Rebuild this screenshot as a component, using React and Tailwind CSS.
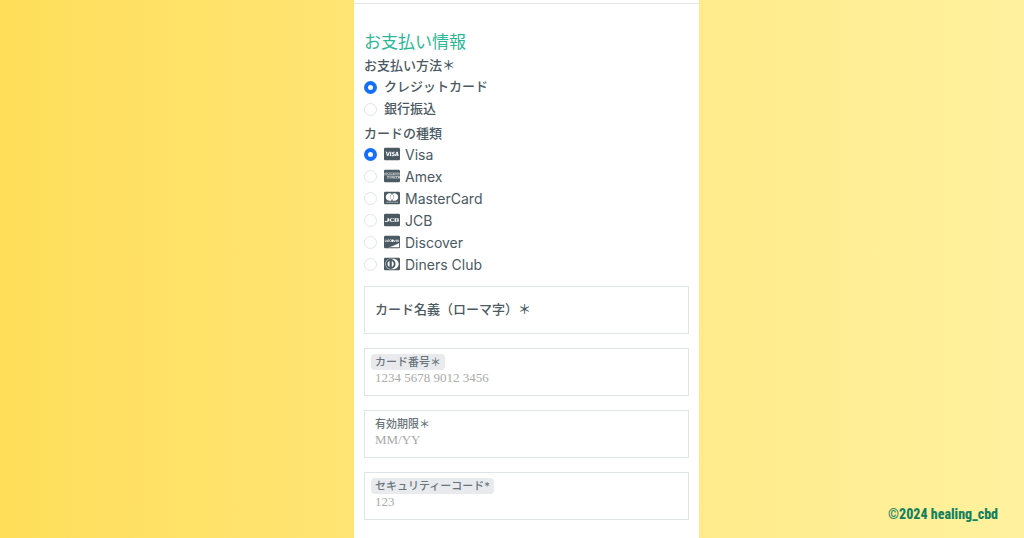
import {
  FaCcVisa,
  FaCcAmex,
  FaCcMastercard,
  FaCcJcb,
  FaCcDiscover,
  FaCcDinersClub,
} from "react-icons/fa";

const methods = ["クレジットカード", "銀行振込"];

const brands = [
  { name: "Visa", Icon: FaCcVisa },
  { name: "Amex", Icon: FaCcAmex },
  { name: "MasterCard", Icon: FaCcMastercard },
  { name: "JCB", Icon: FaCcJcb },
  { name: "Discover", Icon: FaCcDiscover },
  { name: "Diners Club", Icon: FaCcDinersClub },
];

function Radio({ name, value, defaultChecked, children }) {
  return (
    <label className="flex h-[22px] items-center gap-[7px]">
      <input
        type="radio"
        name={name}
        value={value}
        defaultChecked={defaultChecked}
        className="size-[13px] shrink-0 appearance-none rounded-full border border-[#e1e5e8] bg-white checked:border-4 checked:border-[#146ffb]"
      />
      {children}
    </label>
  );
}

function Field({ id, label, placeholder, highlighted }) {
  return (
    <div className="flex h-12 flex-col items-start border border-[#dfe4e7] px-[6px] pt-[5px]">
      <label
        htmlFor={id}
        className={
          "rounded px-1 text-[11px] leading-4 font-medium text-[#69757c] " +
          (highlighted ? "bg-[#e8eaed]" : "")
        }
      >
        {label}
      </label>
      <input
        id={id}
        type="text"
        placeholder={placeholder}
        className="h-4 w-full bg-transparent px-1 font-['Liberation_Serif',serif] text-[13px] leading-4 text-[#495057] outline-none placeholder:text-[#aaaaaa]"
      />
    </div>
  );
}

export default function App() {
  return (
    <div className="grid min-h-screen grid-cols-[minmax(0,354fr)_minmax(0,345fr)_minmax(0,325fr)] bg-linear-to-r from-[#ffde59] to-[#fff19e] font-['Inter','Noto_Sans_CJK_JP',sans-serif] text-[#4b5963]">
      <form className="col-start-2 bg-white pt-[3px]">
        <hr className="border-t border-[#e6e6e6]" />
        <div className="px-[10px] pt-[26px]">
          <h1 className="text-[17px] leading-6 text-[#2cb698]">お支払い情報</h1>

          <fieldset>
            <legend className="text-[13px] leading-[22px] font-medium">お支払い方法＊</legend>
            {methods.map((method, i) => (
              <Radio key={method} name="method" value={method} defaultChecked={i === 0}>
                <span className="text-[13px] font-medium">{method}</span>
              </Radio>
            ))}
          </fieldset>

          <fieldset>
            <legend className="pt-1 text-[13px] leading-[19px] font-medium">カードの種類</legend>
            {brands.map(({ name, Icon }, i) => (
              <Radio key={name} name="brand" value={name} defaultChecked={i === 0}>
                <span className="flex items-center gap-[5px] text-[14px]">
                  <Icon className="size-4" aria-hidden="true" />
                  {name}
                </span>
              </Radio>
            ))}
          </fieldset>

          <div className="flex flex-col gap-[14px] pt-[11px] pb-[17px]">
            <div className="flex h-12 items-center border border-[#dfe4e7] px-[10px]">
              <label htmlFor="holder" className="text-[13px] font-medium whitespace-nowrap">
                カード名義（ローマ字）＊
              </label>
              <input
                id="holder"
                type="text"
                className="h-full min-w-0 flex-1 bg-transparent text-[13px] outline-none"
              />
            </div>
            <Field id="number" label="カード番号＊" placeholder="1234 5678 9012 3456" highlighted />
            <Field id="expiry" label="有効期限＊" placeholder="MM/YY" />
            <Field id="code" label="セキュリティーコード*" placeholder="123" highlighted />
          </div>
        </div>
      </form>
      <footer className="flex items-end justify-end pr-[26px] pb-[14px] font-['Roboto_Condensed','Noto_Sans_CJK_JP',sans-serif] text-[14px] leading-5 font-extrabold text-[#12805f]">
        ©2024 healing_cbd
      </footer>
    </div>
  );
}
